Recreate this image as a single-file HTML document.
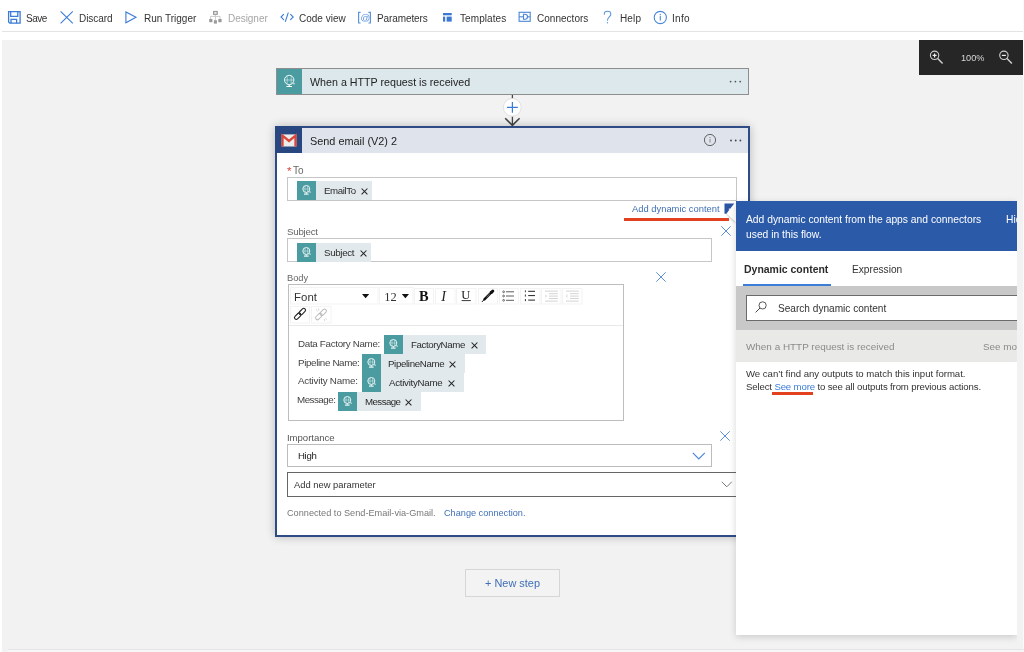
<!DOCTYPE html>
<html><head><meta charset="utf-8">
<style>
*{box-sizing:border-box;margin:0;padding:0}
html,body{width:1024px;height:652px;overflow:hidden;background:#fff;font-family:"Liberation Sans",sans-serif;color:#333}
.a{position:absolute;white-space:nowrap}
svg.a{overflow:visible}
div.a{will-change:transform}
</style></head><body>
<svg width="0" height="0" style="position:absolute"><defs><symbol id="globe" viewBox="0 0 19 19"><g fill="none" stroke="#fff"><circle cx="9.3" cy="8" r="3.5" stroke-width="0.85"/><path d="M8 4.8 V11.2 M10.6 4.8 V11.2 M6 8 H12.6" stroke-width="0.55" opacity="0.75"/><path d="M9.3 11.6 V12.8" stroke-width="0.9"/><path d="M7 13.1 H11.6" stroke-width="1.1"/><path d="M11.9 10.3 Q12.6 11.4 13.9 11.2" stroke-width="0.8"/></g></symbol></defs></svg>
<div class="a" style="left:2px;top:31px;width:1022px;height:1px;background:#e3e3e3"></div>
<div class="a" style="left:2px;top:40px;width:1022px;height:612px;background:#f2f2f2"></div>
<div class="a" style="left:26.2px;top:13.69px;font-size:10px;line-height:1;color:#333;letter-spacing:-0.473px;">Save</div>
<div class="a" style="left:78.8px;top:13.69px;font-size:10px;line-height:1;color:#333;letter-spacing:-0.043px;">Discard</div>
<div class="a" style="left:144.0px;top:13.69px;font-size:10px;line-height:1;color:#333;letter-spacing:0.005px;">Run Trigger</div>
<div class="a" style="left:228.1px;top:13.69px;font-size:10px;line-height:1;color:#a6a6a6;letter-spacing:-0.040px;">Designer</div>
<div class="a" style="left:299.1px;top:13.69px;font-size:10px;line-height:1;color:#333;letter-spacing:0.001px;">Code view</div>
<div class="a" style="left:377.3px;top:13.69px;font-size:10px;line-height:1;color:#333;letter-spacing:-0.099px;">Parameters</div>
<div class="a" style="left:459.7px;top:13.69px;font-size:10px;line-height:1;color:#333;letter-spacing:0.080px;">Templates</div>
<div class="a" style="left:537.0px;top:13.69px;font-size:10px;line-height:1;color:#333;letter-spacing:0.026px;">Connectors</div>
<div class="a" style="left:619.6px;top:13.69px;font-size:10px;line-height:1;color:#333;letter-spacing:0.133px;">Help</div>
<div class="a" style="left:672.0px;top:13.69px;font-size:10px;line-height:1;color:#333;letter-spacing:0.305px;">Info</div>
<!-- toolbar icons -->
<svg class="a" style="left:0;top:0" width="700" height="32" viewBox="0 0 700 32">
 <g fill="none" stroke="#3b7bd6" stroke-width="1.3">
  <path d="M8.6 11.6 H20.1 V23.2 H9.8 L8.6 22 Z"/>
  <path d="M10.7 11.6 V16.3 H17.8 V11.6"/>
  <path d="M11 23.2 V19.4 H16.6 V23.2"/>
 </g>
 <g fill="none" stroke="#3b7bd6" stroke-width="1.1">
  <path d="M60.6 11.4 L72.8 23.4 M72.8 11.4 L60.6 23.4"/>
  <path d="M125.9 11.9 V22.8 L136 17.35 Z" stroke-linejoin="miter"/>
 </g>
 <g fill="#9a9a9a">
  <rect x="213" y="10.9" width="4.8" height="4" />
  <rect x="209.2" y="19" width="3.2" height="3.2"/>
  <rect x="213.9" y="20.2" width="3" height="3.4"/>
  <rect x="218.3" y="19" width="3.3" height="3.2"/>
 </g>
 <rect x="214.3" y="12.2" width="2.2" height="1.5" fill="#fff"/>
 <g fill="none" stroke="#c4c4c4" stroke-width="0.9">
  <path d="M215.4 15 V20 M210.6 19 V16.4 H220 V19"/>
 </g>
 <g fill="none" stroke="#3b7bd6" stroke-width="1.1" stroke-linecap="round">
  <path d="M283.6 14.3 L281 17 L283.6 19.6 M290.6 14.3 L293.2 17 L290.6 19.6 M288.2 12.9 L285.4 21.4"/>
 </g>
 <g fill="none" stroke="#5b93de" stroke-width="1.2">
  <path d="M360.6 12.3 H358.6 V23 H360.6 M368.4 12.3 H370.4 V23 H368.4"/>
 </g>
 <g fill="#3a78d4">
  <rect x="443" y="13" width="8.7" height="2.3"/>
  <rect x="443" y="16.6" width="2.2" height="5"/>
  <rect x="446.6" y="16.6" width="5.1" height="5"/>
 </g>
 <g fill="none" stroke="#4a86d8" stroke-width="1.1">
  <rect x="519.1" y="12.3" width="11.1" height="9"/>
  <path d="M519.1 16.8 H530.2"/>
  <path d="M523.5 14.3 H525 A2.5 2.5 0 0 1 525 19.3 H523.5 Z" fill="#fff"/>
 </g>
 <g fill="none" stroke="#5b95e0" stroke-width="1.1" stroke-linecap="round">
  <path d="M604.3 14.2 C604.3 12.2 606 11.3 607.5 11.3 C609.4 11.3 610.8 12.6 610.8 14.2 C610.8 16.6 607.5 17.2 607.5 20.2"/>
 </g>
 <circle cx="607.5" cy="22.8" r="0.7" fill="#5b95e0"/>
 <g fill="none" stroke="#4a86d8" stroke-width="1.1">
  <circle cx="660.3" cy="17.5" r="6.1"/>
  <path d="M660.3 15.8 V20.6"/>
 </g>
 <circle cx="660.3" cy="14.4" r="0.65" fill="#4a86d8"/>
<text x="360.4" y="20.9" font-family="Liberation Sans" font-size="9.6" fill="#5b93de">@</text>
</svg>
<div class="a" style="left:919px;top:40px;width:104px;height:35px;background:#262626"></div>
<div class="a" style="left:961px;top:54.36px;font-size:9.2px;line-height:1;color:#d8d8d8;">100%</div>
<svg class="a" style="left:0;top:0" width="1024" height="80" viewBox="0 0 1024 80">
 <g fill="none" stroke="#d0d0d0" stroke-width="1.1">
  <circle cx="934.6" cy="55.3" r="4.2"/>
  <path d="M937.7 58.5 L942.6 63.6" stroke-width="1.4"/>
  <path d="M932.6 55.4 H936.6 M934.6 53.4 V57.4" stroke="#eee" stroke-width="1.2"/>
  <circle cx="1003.9" cy="55.3" r="4.2"/>
  <path d="M1007 58.5 L1011.9 63.6" stroke-width="1.4"/>
  <path d="M1001.9 55.4 H1005.9" stroke="#eee" stroke-width="1.2"/>
 </g>
</svg>
<div class="a" style="left:276px;top:68px;width:473px;height:27px;border:1px solid #8e8e8e;background:#dce8ec"></div>
<div class="a" style="left:277px;top:69px;width:25px;height:25px;background:#4a9ca1"></div>
<svg class="a" style="left:277px;top:69px" width="25" height="25" viewBox="0 0 25 25"><g fill="none" stroke="#fff" stroke-width="0.9"><circle cx="12.2" cy="11" r="4.7"/><path d="M10.2 6.8 V15.2 M14.2 6.8 V15.2 M7.6 11 H16.8" stroke-width="0.6" opacity="0.8"/><path d="M12.2 15.7 V17.2 M9.4 17.5 H15" stroke-width="1.1"/><path d="M15.6 14 Q16.5 15.1 17.8 14.8" stroke-width="0.9"/></g></svg>
<div class="a" style="left:309.8px;top:76.59px;font-size:10.7px;line-height:1;color:#222;">When a HTTP request is received</div>
<svg class="a" style="left:728px;top:79px" width="16" height="5"><g fill="#555"><circle cx="2.6" cy="2.6" r="0.9"/><circle cx="7.4" cy="2.6" r="0.9"/><circle cx="12.2" cy="2.6" r="0.9"/></g></svg>
<svg class="a" style="left:495px;top:94px" width="36" height="34" viewBox="495 94 36 34"><path d="M512.4 95 V98.5 M512.4 116.4 V125.5" stroke="#444" stroke-width="1.3"/><path d="M505.2 118.2 L512.4 125.4 L519.6 118.2" stroke="#444" stroke-width="1.6" fill="none"/><circle cx="512.3" cy="107.3" r="8.9" fill="#fff" stroke="#d8d8d8" stroke-width="0.8"/><path d="M507 107.3 H517.8 M512.4 102 V112.8" stroke="#3a7dd6" stroke-width="1.2"/></svg>
<div class="a" style="left:275px;top:126px;width:475px;height:411px;border:2px solid #2f4b86;background:#fff;box-shadow:0 0 9px rgba(0,0,0,0.24)"></div>
<div class="a" style="left:277px;top:128px;width:471px;height:25px;background:#dfe3ec"></div>
<div class="a" style="left:275px;top:126px;width:27px;height:27px;background:#28467f"></div>
<svg class="a" style="left:281px;top:133.5px" width="16" height="13" viewBox="0 0 16 13"><rect x="0.6" y="0.4" width="14.8" height="12.1" fill="#ececec"/><path d="M1.5 12.5 V1.6 L8 7 L14.5 1.6 V12.5" fill="none" stroke="#d8473a" stroke-width="2.3" stroke-linejoin="miter"/></svg>
<div class="a" style="left:309.6px;top:135.94px;font-size:10.88px;line-height:1;color:#222;">Send email (V2) 2</div>
<svg class="a" style="left:703px;top:133px" width="42" height="15" viewBox="703 133 42 15"><circle cx="710" cy="140" r="5.6" fill="none" stroke="#555" stroke-width="0.9"/><circle cx="710" cy="137.6" r="0.6" fill="#777"/><path d="M710 139 V142.6" stroke="#888" stroke-width="1"/><g fill="#444"><circle cx="731" cy="140.5" r="0.9"/><circle cx="735.7" cy="140.5" r="0.9"/><circle cx="740.4" cy="140.5" r="0.9"/></g></svg>
<div class="a" style="left:286.6px;top:166.42px;font-size:11.5px;line-height:1;color:#d8473a;">*</div>
<div class="a" style="left:293.2px;top:166.28px;font-size:10px;line-height:1;color:#666;">To</div>
<div class="a" style="left:287px;top:177px;width:450px;height:24px;border:1px solid #c6c6c6;background:#fff"></div>
<div class="a" style="left:297px;top:181px;width:75px;height:19px;background:#e1e9ec"></div>
<div class="a" style="left:297px;top:181px;width:19px;height:19px;background:#4a9ca1"></div>
<svg class="a" style="left:297px;top:181px" width="19" height="19"><use href="#globe"/></svg>
<div class="a" style="left:324px;top:186.24px;font-size:9.7px;line-height:1;color:#2a2a2a;letter-spacing:-0.400px;">EmailTo</div>
<svg class="a" style="left:361px;top:188.2px" width="7" height="7" viewBox="0 0 7 7"><path d="M0.6 0.5 L6.4 6.3 M6.4 0.5 L0.6 6.3" stroke="#222" stroke-width="1.05"/></svg>
<div class="a" style="left:632px;top:204.19px;font-size:9.4px;line-height:1;color:#3f6fb6;">Add dynamic content</div>
<svg class="a" style="left:720px;top:198px" width="20" height="30" viewBox="720 198 20 30"><defs><filter id="cs" x="-50%" y="-50%" width="200%" height="200%"><feGaussianBlur stdDeviation="1.2"/></filter></defs><path d="M724.5 203.4 H734.3 V206 L727 213.8 H724.5 Z" fill="#2b55a3"/><path d="M729.3 208 L730 209.2 L729.3 210.2 L728.6 209.2 Z" fill="#fff" opacity="0.9"/><path d="M736 204 L727 214 L736 223 Z" fill="#000" opacity="0.38" filter="url(#cs)"/><path d="M735 202.5 L736.5 202.5 L736.5 223 L726.5 213.6 Z" fill="#fff"/></svg>
<div class="a" style="left:624px;top:218px;width:105px;height:3px;background:#e2401e"></div>
<svg class="a" style="left:720.5px;top:226px" width="10" height="10" viewBox="0 0 10 10"><path d="M0.3 0.3 L9.7 9.7 M9.7 0.3 L0.3 9.7" stroke="#5b8fd6" stroke-width="1" fill="none"/></svg>
<div class="a" style="left:287px;top:227.44px;font-size:9.7px;line-height:1;color:#666;letter-spacing:-0.208px;">Subject</div>
<div class="a" style="left:287px;top:238px;width:425px;height:24px;border:1px solid #c6c6c6;background:#fff"></div>
<div class="a" style="left:297px;top:243px;width:74px;height:19px;background:#e1e9ec"></div>
<div class="a" style="left:297px;top:243px;width:19px;height:19px;background:#4a9ca1"></div>
<svg class="a" style="left:297px;top:243px" width="19" height="19"><use href="#globe"/></svg>
<div class="a" style="left:323.7px;top:248.24px;font-size:9.7px;line-height:1;color:#2a2a2a;letter-spacing:-0.294px;">Subject</div>
<svg class="a" style="left:359.5px;top:250.2px" width="7" height="7" viewBox="0 0 7 7"><path d="M0.6 0.5 L6.4 6.3 M6.4 0.5 L0.6 6.3" stroke="#222" stroke-width="1.05"/></svg>
<svg class="a" style="left:656.3px;top:272.3px" width="10" height="10" viewBox="0 0 10 10"><path d="M0.3 0.3 L9.7 9.7 M9.7 0.3 L0.3 9.7" stroke="#5b8fd6" stroke-width="1" fill="none"/></svg>
<div class="a" style="left:287px;top:273.78px;font-size:9.3px;line-height:1;color:#666;">Body</div>
<div class="a" style="left:288px;top:284px;width:336px;height:137px;border:1px solid #bdbdbd;background:#fff"></div>
<svg class="a" style="left:288px;top:284px" width="336" height="42" viewBox="288 284 336 42">
 <g fill="#fff" stroke="#f3f3f3" stroke-width="1">
  <rect x="290.5" y="287.5" width="87.5" height="16.5"/>
  <rect x="379.5" y="287.5" width="33.5" height="16.5"/>
  <rect x="414.5" y="288.5" width="19" height="15.5"/>
  <rect x="435.5" y="288.5" width="19.5" height="15.5"/>
  <rect x="456.5" y="288.5" width="19.5" height="15.5"/>
  <rect x="478.5" y="288.5" width="19" height="15.5"/>
  <rect x="499.5" y="288.5" width="19" height="15.5"/>
  <rect x="520.5" y="288.5" width="19.5" height="15.5"/>
  <rect x="541.5" y="288.5" width="19.5" height="15.5"/>
  <rect x="562.5" y="288.5" width="19.5" height="15.5"/>
  <rect x="290.5" y="306.5" width="19" height="16.5"/>
  <rect x="311.5" y="306.5" width="19.5" height="16.5"/>
 </g>
 <path d="M289 325.5 H623" stroke="#e9e9e9" stroke-width="1"/>
 <g fill="#111">
  <path d="M362 294 H369.2 L365.6 298.2 Z"/>
  <path d="M401.8 294 H409 L405.4 298.2 Z"/>
 </g>
 <text x="294.1" y="300.8" font-family="Liberation Sans" font-size="11.4" fill="#333">Font</text>
 <text x="384.2" y="300.8" font-family="Liberation Serif" font-size="12.4" fill="#333">12</text>
 <text x="419" y="300.8" font-family="Liberation Serif" font-weight="bold" font-size="14.4" fill="#111">B</text>
 <text x="441.2" y="300.8" font-family="Liberation Serif" font-style="italic" font-size="14.2" fill="#222">I</text>
 <text x="461.2" y="298.8" font-family="Liberation Serif" font-size="12.6" fill="#1a1a1a">U</text>
 <path d="M461.6 300.6 H470.8" stroke="#222" stroke-width="0.9"/>
 <g stroke="#111" stroke-linecap="round">
  <path d="M484.4 299.4 L491.6 292.2" stroke-width="2.4"/>
  <path d="M491.4 292.4 L492.8 291" stroke-width="3"/>
  <path d="M482.1 301.7 L484 299.8" stroke-width="1"/>
 </g>
 <g fill="none" stroke="#333">
  <circle cx="503.6" cy="291.8" r="0.9" stroke-width="0.7"/>
  <circle cx="503.6" cy="296" r="0.9" stroke-width="0.7"/>
  <circle cx="503.6" cy="300.3" r="0.9" stroke-width="0.7"/>
  <path d="M506 291.8 H514 M506 296 H514 M506 300.3 H514" stroke-width="0.8"/>
 </g>
 <g stroke="#222">
  <path d="M528.2 291.3 H535 M528.2 295.6 H535 M528.2 300.1 H535" stroke-width="1"/>
  <path d="M525.4 290.4 V292.2 M525.4 294.5 V296.6 M525.4 299 V301.2" stroke-width="0.9"/>
 </g>
 <g stroke="#c8c8c8" stroke-width="0.8" fill="none">
  <path d="M545 291.1 H557.8 M549 293.7 H557.8 M549 296.1 H557.8 M549 298.5 H557.8 M545 301.1 H557.8"/>
  <path d="M545.2 295 L546.6 296.1 L545.2 297.2"/>
  <path d="M566 291.1 H578.8 M570 293.7 H578.8 M570 296.1 H578.8 M570 298.5 H578.8 M566 301.1 H578.8"/>
  <path d="M567.6 295 L566.2 296.1 L567.6 297.2"/>
 </g>
 <g fill="none" stroke="#222" stroke-width="1.1">
  <rect x="293.9" y="314.4" width="7.6" height="3.6" rx="1.8" transform="rotate(-45 297.7 316.2)"/>
  <rect x="298.5" y="309.8" width="7.6" height="3.6" rx="1.8" transform="rotate(-45 302.3 311.6)"/>
 </g>
 <g fill="none" stroke="#bdbdbd" stroke-width="1.05">
  <rect x="315" y="314.6" width="7.6" height="3.8" rx="1.9" transform="rotate(-45 318.8 316.5)"/>
  <rect x="319.4" y="310.4" width="7.6" height="3.8" rx="1.9" transform="rotate(-45 323.2 312.3)"/>
  <path d="M316 309.5 L317.6 311 M318.6 308.6 L318.9 310.4 M324.6 320.8 L324.3 319 M326.8 319.5 L325.4 318.2" stroke-width="0.7"/>
 </g>
<path d="M486.6 297.2 L489.8 294" stroke="#fff" stroke-width="0.5" opacity="0.8"/>
</svg>

<div class="a" style="left:297.5px;top:338.85px;font-size:9.8px;line-height:1;color:#444;letter-spacing:-0.316px;">Data Factory Name:</div>
<div class="a" style="left:384px;top:335px;width:102.4px;height:19px;background:#e1e9ec"></div>
<div class="a" style="left:384px;top:335px;width:19px;height:19px;background:#4a9ca1"></div>
<svg class="a" style="left:384px;top:335px" width="19" height="19"><use href="#globe"/></svg>
<div class="a" style="left:411px;top:340.24px;font-size:9.7px;line-height:1;color:#2a2a2a;letter-spacing:-0.383px;">FactoryName</div>
<svg class="a" style="left:471px;top:342.2px" width="7" height="7" viewBox="0 0 7 7"><path d="M0.6 0.5 L6.4 6.3 M6.4 0.5 L0.6 6.3" stroke="#222" stroke-width="1.05"/></svg>
<div class="a" style="left:297.5px;top:357.85px;font-size:9.8px;line-height:1;color:#444;letter-spacing:-0.354px;">Pipeline Name:</div>
<div class="a" style="left:361.6px;top:354px;width:103.4px;height:19px;background:#e1e9ec"></div>
<div class="a" style="left:361.6px;top:354px;width:19px;height:19px;background:#4a9ca1"></div>
<svg class="a" style="left:361.6px;top:354px" width="19" height="19"><use href="#globe"/></svg>
<div class="a" style="left:387.7px;top:359.24px;font-size:9.7px;line-height:1;color:#2a2a2a;letter-spacing:-0.341px;">PipelineName</div>
<svg class="a" style="left:449px;top:361.2px" width="7" height="7" viewBox="0 0 7 7"><path d="M0.6 0.5 L6.4 6.3 M6.4 0.5 L0.6 6.3" stroke="#222" stroke-width="1.05"/></svg>
<div class="a" style="left:297.5px;top:376.35px;font-size:9.8px;line-height:1;color:#444;letter-spacing:-0.209px;">Activity Name:</div>
<div class="a" style="left:362.2px;top:373px;width:101.5px;height:19px;background:#e1e9ec"></div>
<div class="a" style="left:362.2px;top:373px;width:19px;height:19px;background:#4a9ca1"></div>
<svg class="a" style="left:362.2px;top:373px" width="19" height="19"><use href="#globe"/></svg>
<div class="a" style="left:388.75px;top:378.24px;font-size:9.7px;line-height:1;color:#2a2a2a;letter-spacing:-0.258px;">ActivityName</div>
<svg class="a" style="left:447.8px;top:380.2px" width="7" height="7" viewBox="0 0 7 7"><path d="M0.6 0.5 L6.4 6.3 M6.4 0.5 L0.6 6.3" stroke="#222" stroke-width="1.05"/></svg>
<div class="a" style="left:297px;top:395.05px;font-size:9.8px;line-height:1;color:#444;letter-spacing:-0.511px;">Message:</div>
<div class="a" style="left:338px;top:392px;width:83px;height:19px;background:#e1e9ec"></div>
<div class="a" style="left:338px;top:392px;width:19px;height:19px;background:#4a9ca1"></div>
<svg class="a" style="left:338px;top:392px" width="19" height="19"><use href="#globe"/></svg>
<div class="a" style="left:364.7px;top:397.24px;font-size:9.7px;line-height:1;color:#2a2a2a;letter-spacing:-0.551px;">Message</div>
<svg class="a" style="left:404.8px;top:399.2px" width="7" height="7" viewBox="0 0 7 7"><path d="M0.6 0.5 L6.4 6.3 M6.4 0.5 L0.6 6.3" stroke="#222" stroke-width="1.05"/></svg>
<div class="a" style="left:287px;top:432.62px;font-size:9.6px;line-height:1;color:#555;letter-spacing:-0.042px;">Importance</div>
<svg class="a" style="left:720.4px;top:430.9px" width="10" height="10" viewBox="0 0 10 10"><path d="M0.3 0.3 L9.7 9.7 M9.7 0.3 L0.3 9.7" stroke="#5b8fd6" stroke-width="1" fill="none"/></svg>
<div class="a" style="left:287px;top:444px;width:425px;height:23px;border:1px solid #bcbcbc;background:#fff"></div>
<div class="a" style="left:297.6px;top:451.02px;font-size:9.6px;line-height:1;color:#222;letter-spacing:-0.336px;">High</div>
<svg class="a" style="left:692px;top:452px" width="14" height="8" viewBox="0 0 14 8"><path d="M0.8 0.8 L6.8 6.8 L12.8 0.8" fill="none" stroke="#4a86d8" stroke-width="1.2"/></svg>
<div class="a" style="left:287px;top:472px;width:455px;height:25px;border:1px solid #666;background:#fff"></div>
<svg class="a" style="left:721px;top:481px" width="12" height="7" viewBox="0 0 12 7"><path d="M0.8 0.8 L5.8 5.8 L10.8 0.8" fill="none" stroke="#777" stroke-width="1"/></svg>
<div class="a" style="left:294.1px;top:481.22px;font-size:9.37px;line-height:1;color:#333;">Add new parameter</div>
<div class="a" style="left:287px;top:508.99px;font-size:9.17px;line-height:1;color:#777;">Connected to Send-Email-via-Gmail.</div>
<div class="a" style="left:444px;top:509.00px;font-size:9.16px;line-height:1;color:#3f6fb6;">Change connection.</div>
<div class="a" style="left:465px;top:569px;width:95px;height:28px;border:1px solid #d6d6d6;background:#f3f3f3"></div>
<div class="a" style="left:485px;top:578.18px;font-size:10.95px;line-height:1;color:#3f6fb6;">+ New step</div>
<div class="a" style="left:736px;top:201px;width:281px;height:434px;background:#fff;box-shadow:0 2px 7px rgba(0,0,0,0.16)"></div>
<div class="a" style="left:736px;top:201px;width:281px;height:50px;background:#2a5aa8"></div>
<div class="a" style="left:746px;top:214.63px;font-size:10.3px;line-height:1;color:#fff;">Add dynamic content from the apps and connectors</div>
<div class="a" style="left:746px;top:230.23px;font-size:10.3px;line-height:1;color:#fff;">used in this flow.</div>
<div class="a" style="left:1005.7px;top:215.03px;font-size:10.3px;line-height:1;color:#fff;width:11.3px;overflow:hidden">Hide</div>
<div class="a" style="left:744.4px;top:264.99px;font-size:10.47px;line-height:1;color:#2b2b2b;font-weight:bold;">Dynamic content</div>
<div class="a" style="left:851.7px;top:264.54px;font-size:10.17px;line-height:1;color:#333;">Expression</div>
<div class="a" style="left:743px;top:284px;width:88px;height:2px;background:#3c7dd8"></div>
<div class="a" style="left:736px;top:286px;width:281px;height:44px;background:#c8c8c8"></div>
<div class="a" style="left:746px;top:295px;width:271px;height:26px;background:#fff;border:1px solid #6a6a6a;border-right:none"></div>
<svg class="a" style="left:754px;top:300px" width="14" height="14" viewBox="0 0 14 14"><circle cx="8.6" cy="5.4" r="3.6" fill="none" stroke="#444" stroke-width="0.9"/><path d="M6 8 L1.6 12.4" stroke="#444" stroke-width="1"/></svg>
<div class="a" style="left:777.8px;top:303.79px;font-size:10.11px;line-height:1;color:#333;">Search dynamic content</div>
<div class="a" style="left:736px;top:330px;width:281px;height:32px;background:#e9eae8"></div>
<div class="a" style="left:746.2px;top:341.76px;font-size:9.91px;line-height:1;color:#8a8a8a;">When a HTTP request is received</div>
<div class="a" style="left:982.7px;top:341.77px;font-size:9.9px;line-height:1;color:#8a8a8a;width:34.3px;overflow:hidden">See more</div>
<div class="a" style="left:746px;top:369.12px;font-size:9.6px;line-height:1;color:#333;letter-spacing:-0.021px;">We can’t find any outputs to match this input format.</div>
<div class="a" style="left:746px;top:382.42px;font-size:9.6px;line-height:1;color:#333;letter-spacing:-0.135px;">Select <span style="color:#3c7dd8">See more</span> to see all outputs from previous actions.</div>
<div class="a" style="left:772px;top:392px;width:41px;height:3px;background:#e2401e"></div>
<div class="a" style="left:1017px;top:76px;width:6px;height:573px;background:#f2f2f2"></div>
<div class="a" style="left:1023px;top:0px;width:1px;height:652px;background:#fbfbfb"></div>
<div class="a" style="left:8px;top:649px;width:1016px;height:1px;background:#e6e6e6"></div>
<div class="a" style="left:8px;top:650px;width:1016px;height:2px;background:#f6f6f6"></div>
</body></html>
